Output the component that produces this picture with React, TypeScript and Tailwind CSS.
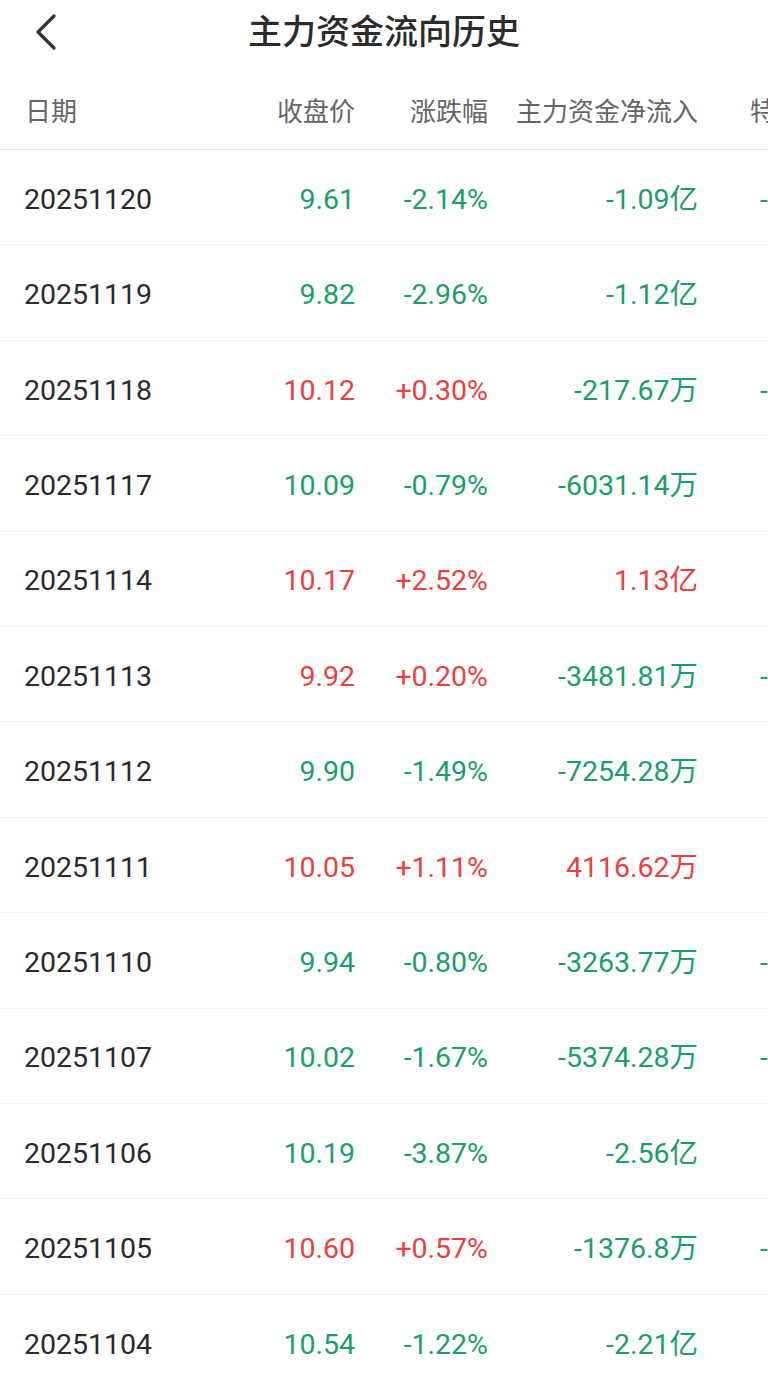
import React from 'react';

interface FlowRow {
  date: string;
  close: string;
  change: string;
  netFlow: string;
  special: string;
}

const rows: FlowRow[] = [
  { date: '20251120', close: '9.61', change: '-2.14%', netFlow: '-1.09亿', special: '-' },
  { date: '20251119', close: '9.82', change: '-2.96%', netFlow: '-1.12亿', special: '' },
  { date: '20251118', close: '10.12', change: '+0.30%', netFlow: '-217.67万', special: '-' },
  { date: '20251117', close: '10.09', change: '-0.79%', netFlow: '-6031.14万', special: '' },
  { date: '20251114', close: '10.17', change: '+2.52%', netFlow: '1.13亿', special: '' },
  { date: '20251113', close: '9.92', change: '+0.20%', netFlow: '-3481.81万', special: '-' },
  { date: '20251112', close: '9.90', change: '-1.49%', netFlow: '-7254.28万', special: '' },
  { date: '20251111', close: '10.05', change: '+1.11%', netFlow: '4116.62万', special: '' },
  { date: '20251110', close: '9.94', change: '-0.80%', netFlow: '-3263.77万', special: '-' },
  { date: '20251107', close: '10.02', change: '-1.67%', netFlow: '-5374.28万', special: '-' },
  { date: '20251106', close: '10.19', change: '-3.87%', netFlow: '-2.56亿', special: '' },
  { date: '20251105', close: '10.60', change: '+0.57%', netFlow: '-1376.8万', special: '-' },
  { date: '20251104', close: '10.54', change: '-1.22%', netFlow: '-2.21亿', special: '' },
];

const tone = (v: string) => (v.startsWith('-') ? 'text-[#1b9e6b]' : 'text-[#e8413e]');

export default function App() {
  return (
    <div
      className="w-[768px] h-[1384px] overflow-hidden bg-white text-[#333333]"
      style={{ fontFamily: 'Roboto, "Noto Sans CJK SC", sans-serif' }}
    >
      {/* Title bar */}
      <div className="relative h-[66px] flex items-center justify-center">
        <button className="absolute left-[30px] top-[13px] w-[32px] h-[38px] flex items-center justify-center">
          <svg width="28" height="38" viewBox="0 0 28 38" fill="none">
            <path d="M22 3 L6 19 L22 35" stroke="#333333" strokeWidth="3.2" strokeLinecap="round" strokeLinejoin="round" />
          </svg>
        </button>
        <h1 className="text-[34px] font-medium text-[#2b2b2b] -mt-[2px]">主力资金流向历史</h1>
      </div>

      {/* Column headers */}
      <div className="flex items-center h-[84px] pt-[10px] border-b border-[#e6e6e6] text-[26px] text-[#666666] whitespace-nowrap">
        <div className="w-[225px] shrink-0 pl-[25px]">日期</div>
        <div className="w-[130px] shrink-0 text-right">收盘价</div>
        <div className="w-[133px] shrink-0 text-right">涨跌幅</div>
        <div className="w-[210px] shrink-0 text-right">主力资金净流入</div>
        <div className="w-[120px] shrink-0 pl-[52px]">特大单净流入</div>
      </div>

      {/* Rows */}
      {rows.map((r) => (
        <div
          key={r.date}
          className="flex items-center h-[95.4px] pt-[6px] border-b border-[#f3f3f3] text-[28.5px] whitespace-nowrap"
        >
          <div className="w-[225px] shrink-0 pl-[24px] text-[#2b2b2b]">{r.date}</div>
          <div className={`w-[130px] shrink-0 text-right ${tone(r.change)}`}>{r.close}</div>
          <div className={`w-[133px] shrink-0 text-right ${tone(r.change)}`}>{r.change}</div>
          <div className={`w-[210px] shrink-0 text-right ${tone(r.netFlow)}`}>{r.netFlow}</div>
          <div className="w-[120px] shrink-0 pl-[62px] text-[#1b9e6b]">{r.special}</div>
        </div>
      ))}
    </div>
  );
}
